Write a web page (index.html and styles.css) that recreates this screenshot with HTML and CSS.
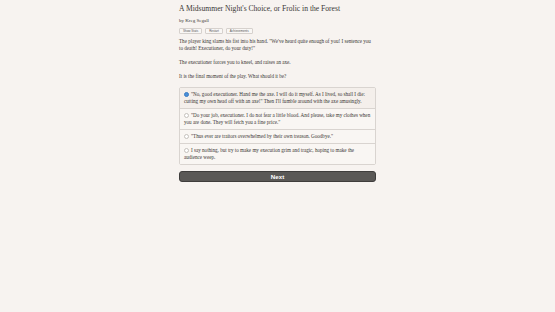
FILE: index.html
```html
<!DOCTYPE html>
<html lang="en">
<head>
    <meta charset="UTF-8">
    <title>A Midsummer Night's Choice, or Frolic in the Forest</title>
    <link rel="stylesheet" href="styles.css">
</head>
<body>
    <div class="container">
        <h1 class="title">A Midsummer Night's Choice, or Frolic in the Forest</h1>
        <div class="author">by Kreg Segall</div>
        <div class="buttons">
            <button class="small-btn">Show Stats</button>
            <button class="small-btn">Restart</button>
            <button class="small-btn">Achievements</button>
        </div>
        <p>The player king slams his fist into his hand. "We've heard quite enough of you! I sentence you to death! Executioner, do your duty!"</p>
        <p>The executioner forces you to kneel, and raises an axe.</p>
        <p>It is the final moment of the play. What should it be?</p>
        <div class="choices">
            <label class="choice selected"><span class="radio"></span>"No, good executioner. Hand me the axe. I will do it myself. As I lived, so shall I die: cutting my own head off with an axe!" Then I'll fumble around with the axe amusingly.</label>
            <label class="choice"><span class="radio"></span>"Do your job, executioner. I do not fear a little blood. And please, take my clothes when you are done. They will fetch you a fine price."</label>
            <label class="choice"><span class="radio"></span>"Thus ever are traitors overwhelmed by their own treason. Goodbye."</label>
            <label class="choice"><span class="radio"></span>I say nothing, but try to make my execution grim and tragic, hoping to make the audience weep.</label>
        </div>
        <button class="next">Next</button>
    </div>
</body>
</html>
```

FILE: styles.css
```css
body {
    margin: 0;
    background: #f7f3f0;
    color: #3a3735;
    font-family: "Liberation Serif", "DejaVu Serif", serif;
}
.container {
    width: 197px;
    margin: 0 auto;
    padding-top: 3px;
}
.title {
    font-size: 7.6px;
    font-weight: normal;
    margin: 0;
    line-height: 11px;
}
.author {
    font-size: 5px;
    line-height: 7px;
    margin-top: 3px;
}
.buttons {
    display: flex;
    gap: 3px;
    margin-top: 4px;
}
.small-btn {
    font-family: "Liberation Sans", Arial, sans-serif;
    font-size: 3px;
    line-height: 4px;
    padding: 0 3px;
    background: #f9f7f5;
    border: 1px solid #d6d1cd;
    border-radius: 1px;
    color: #555;
}
p {
    font-size: 5.1px;
    line-height: 7px;
    margin: 4px 0 7px;
}
.choices {
    border: 1px solid #d9d4d0;
    border-radius: 2px;
    margin-top: 4px;
}
.choice {
    display: block;
    font-size: 5.1px;
    line-height: 7px;
    padding: 3px 2px 3px 4px;
    border-top: 1px solid #d9d4d0;
    background: #f9f6f3;
}
.choice:first-child {
    border-top: none;
}
.choice.selected {
    background: #f4efeb;
}
.radio {
    display: inline-block;
    width: 3px;
    height: 3px;
    border: 0.5px solid #c4c0bc;
    border-radius: 50%;
    background: #fff;
    margin-right: 2px;
    vertical-align: middle;
}
.selected .radio {
    background: #4a8fd8;
    border-color: #3a7cc4;
}
.next {
    display: block;
    width: 100%;
    height: 11px;
    margin-top: 6px;
    padding: 0;
    background: #5a5856;
    border: 1px solid #3f3d3c;
    border-radius: 3px;
    color: #fff;
    font-family: "Liberation Sans", Arial, sans-serif;
    font-weight: bold;
    font-size: 6.2px;
}
```
